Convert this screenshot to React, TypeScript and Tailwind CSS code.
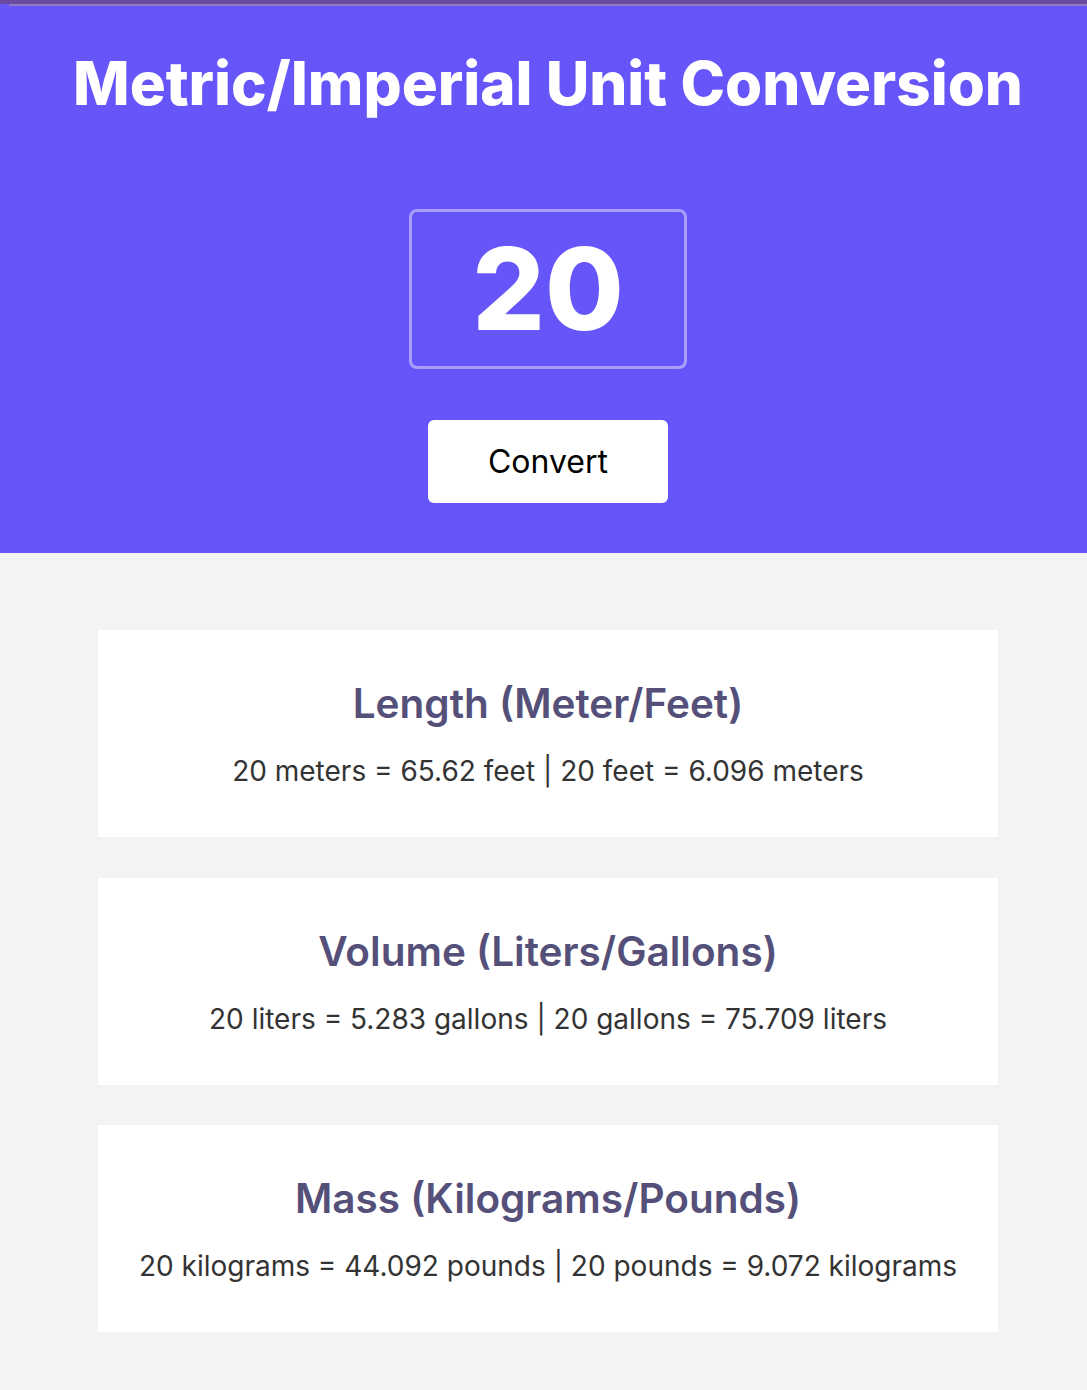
const conversions = [
  {
    title: 'Length (Meter/Feet)',
    left: '20 meters = 65.62 feet',
    right: '20 feet = 6.096 meters',
  },
  {
    title: 'Volume (Liters/Gallons)',
    left: '20 liters = 5.283 gallons',
    right: '20 gallons = 75.709 liters',
  },
  {
    title: 'Mass (Kilograms/Pounds)',
    left: '20 kilograms = 44.092 pounds',
    right: '20 pounds = 9.072 kilograms',
  },
];

export default function App() {
  return (
    <div className="min-h-[1390px] bg-[#f3f3f3] font-['Inter',sans-serif]">
      {/* Header */}
      <header className="bg-[#6655f9] border-t-4 border-[#6b4b9f] pl-[9px] pt-[49px] pb-[50px] flex flex-col items-center">
        <div className="h-[2px] w-full -mt-[49px] mb-[47px] bg-[#8b7cc4]" />
        <h1 className="text-[60px] leading-[60px] font-extrabold text-white">
          Metric/Imperial Unit Conversion
        </h1>
        <div className="mt-[96px] w-[278px] h-[160px] border-[3px] border-[#aa9ef8] rounded-[8px] flex items-center justify-center">
          <span className="text-[114px] leading-none font-extrabold text-white">20</span>
        </div>
        <button className="mt-[51px] w-[240px] h-[83px] bg-white rounded-[6px] text-[32px] text-black">
          Convert
        </button>
      </header>

      {/* Results */}
      <main className="pl-[9px] pt-[77px] pb-[58px] flex flex-col items-center gap-[40.5px]">
        {conversions.map((c) => (
          <section
            key={c.title}
            className="w-[900px] h-[207px] bg-white flex flex-col items-center pt-[50px]"
          >
            <h2 className="text-[40.5px] leading-[48px] font-semibold text-[#54507a]">{c.title}</h2>
            <p className="mt-[25px] text-[28px] leading-[36px] text-[#333333]">
              {c.left} <span>|</span> {c.right}
            </p>
          </section>
        ))}
      </main>
    </div>
  );
}
